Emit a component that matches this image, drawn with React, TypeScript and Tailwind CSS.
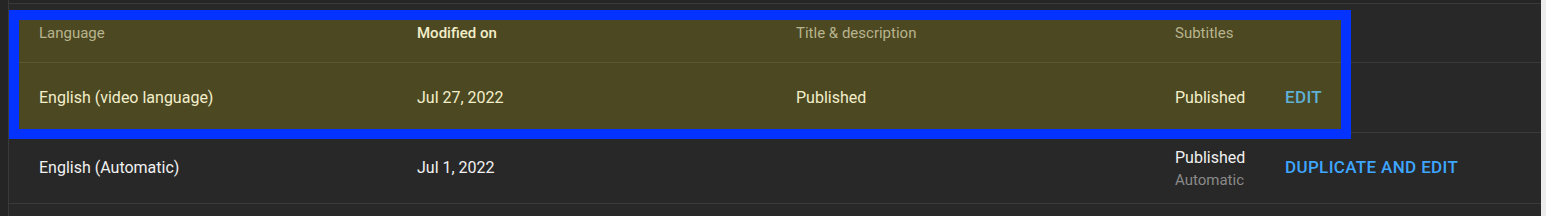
import React from "react";

const cols = "grid grid-cols-[378px_379px_379px_110px_1fr] pl-[30px] items-center";

export default function App() {
  return (
    <div className="relative w-[1546px] h-[216px] bg-[#282828] flex font-['Roboto','Liberation_Sans',sans-serif] overflow-hidden">
      <div className="w-[9px] shrink-0 bg-[#252525] border-r border-[#3a3a3a]" />
      <div className="flex-1 flex flex-col">
        <div className="h-[4px] bg-[#252525] border-b border-[#3a3a3a]" />
        <div className={`${cols} h-[59px] border-b border-[#3a3a3a] text-[15px] text-[#aaaaaa]`}>
          <div>Language</div>
          <div className="font-medium text-[#f1f1f1]">Modified on</div>
          <div>Title &amp; description</div>
          <div>Subtitles</div>
          <div />
        </div>
        <div className={`${cols} h-[70px] border-b border-[#3a3a3a] text-[16px] text-[#f1f1f1]`}>
          <div>English (video language)</div>
          <div>Jul 27, 2022</div>
          <div>Published</div>
          <div>Published</div>
          <div className="text-[17px] font-medium tracking-[0.35px] text-[#3ea6ff]">EDIT</div>
        </div>
        <div className={`${cols} h-[71px] border-b border-[#3a3a3a] text-[16px] text-[#f1f1f1]`}>
          <div>English (Automatic)</div>
          <div>Jul 1, 2022</div>
          <div />
          <div className="flex flex-col leading-[22px] pt-[1px]">
            <span>Published</span>
            <span className="text-[15px] text-[#8a8a8a]">Automatic</span>
          </div>
          <div className="text-[17px] font-medium tracking-[0.35px] text-[#3ea6ff]">DUPLICATE AND EDIT</div>
        </div>
        <div className="flex-1" />
      </div>
      <div className="w-[5px] shrink-0 bg-[#ececec]" />
      <div className="absolute left-[9px] top-[10px] w-[1342px] h-[129px] border-[10px] border-[#0433ff] bg-[rgba(255,232,0,0.17)] pointer-events-none" />
    </div>
  );
}
